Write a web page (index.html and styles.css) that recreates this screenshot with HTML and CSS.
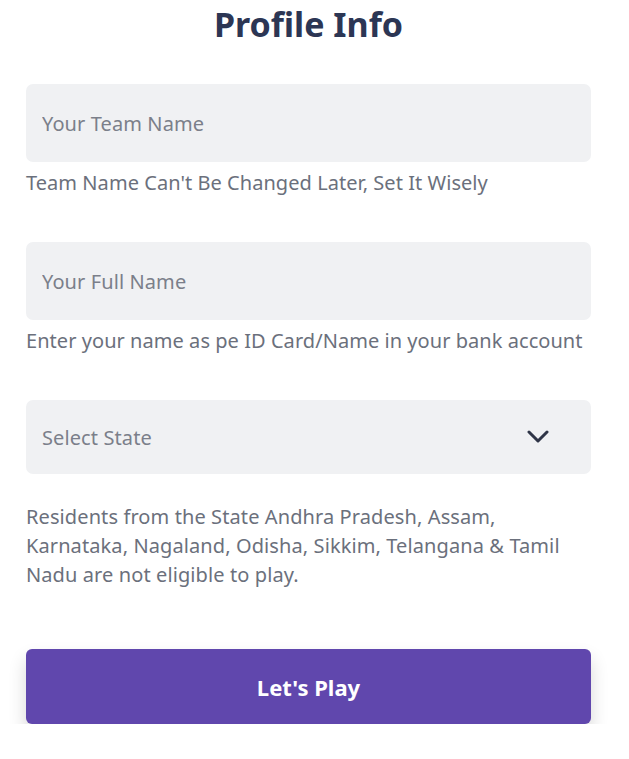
FILE: index.html
```html
<!DOCTYPE html>
<html lang="en">
<head>
    <meta charset="UTF-8">
    <meta name="viewport" content="width=device-width, initial-scale=1.0">
    <title>Profile Info</title>
    <link rel="stylesheet" href="styles.css">
</head>
<body>

<div class="container">
    <h1 class="title">Profile Info</h1>

    <div class="field">
        <input type="text" class="text-input" placeholder="Your Team Name">
        <p class="hint">Team Name Can't Be Changed Later, Set It Wisely</p>
    </div>

    <div class="field">
        <input type="text" class="text-input" placeholder="Your Full Name">
        <p class="hint">Enter your name as pe ID Card/Name in your bank account</p>
    </div>

    <div class="field">
        <div class="select-box">
            <span>Select State</span>
            <svg class="chevron" width="22" height="14" viewBox="0 0 22 14">
                <path d="M2 2 L11 11 L20 2" fill="none" stroke="#2f3547" stroke-width="3" stroke-linecap="round" stroke-linejoin="round"/>
            </svg>
        </div>
        <p class="notice">Residents from the State Andhra Pradesh, Assam, Karnataka, Nagaland, Odisha, Sikkim, Telangana &amp; Tamil Nadu are not eligible to play.</p>
    </div>

    <button class="play-btn">Let's Play</button>
</div>

</body>
</html>
```

FILE: styles.css
```css
body {
    font-family: 'Noto Sans', Lato, sans-serif;
    background-color: #ffffff;
    color: #6b707c;
    margin: 0;
}
.container {
    padding: 0 38px 0 26px;
}
.title {
    margin: 0;
    padding-top: 1px;
    text-align: center;
    font-size: 34px;
    font-weight: 700;
    color: #2c3654;
    line-height: 46px;
}
.field {
    margin-top: 37px;
}
.field + .field {
    margin-top: 45px;
}
.text-input {
    display: block;
    width: 100%;
    box-sizing: border-box;
    height: 78px;
    border: none;
    border-radius: 7px;
    background-color: #f0f1f3;
    padding: 0 16px;
    font-family: inherit;
    font-size: 20px;
    letter-spacing: 0.1px;
    color: #333;
}
.text-input::placeholder {
    color: #7b7f8a;
}
.text-input:focus {
    outline: none;
}
.hint {
    margin: 7px 0 0;
    font-size: 20px;
    letter-spacing: 0.05px;
    line-height: 28px;
}
.select-box {
    display: flex;
    align-items: center;
    justify-content: space-between;
    height: 74px;
    border-radius: 7px;
    background-color: #f0f1f3;
    padding: 0 42px 0 16px;
    font-size: 20px;
    letter-spacing: 0.1px;
    color: #7b7f8a;
}
.notice {
    margin: 28px 0 0;
    font-size: 20px;
    letter-spacing: 0.1px;
    line-height: 29px;
}
.play-btn {
    display: block;
    width: 100%;
    height: 75px;
    margin-top: 60px;
    border: none;
    border-radius: 6px;
    background-color: #6047ad;
    color: #ffffff;
    font-family: inherit;
    font-size: 22px;
    font-weight: 700;
    box-shadow: 0 10px 18px rgba(0, 0, 0, 0.16);
    cursor: pointer;
}
```
